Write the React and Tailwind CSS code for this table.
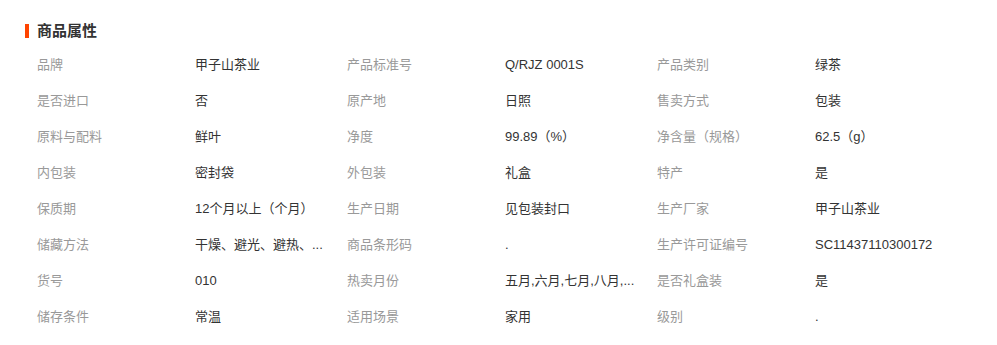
import React from 'react'

const rows = [
  [['品牌', '甲子山茶业'], ['产品标准号', 'Q/RJZ 0001S'], ['产品类别', '绿茶']],
  [['是否进口', '否'], ['原产地', '日照'], ['售卖方式', '包装']],
  [['原料与配料', '鲜叶'], ['净度', '99.89（%）'], ['净含量（规格）', '62.5（g）']],
  [['内包装', '密封袋'], ['外包装', '礼盒'], ['特产', '是']],
  [['保质期', '12个月以上（个月）'], ['生产日期', '见包装封口'], ['生产厂家', '甲子山茶业']],
  [['储藏方法', '干燥、避光、避热、...'], ['商品条形码', '.'], ['生产许可证编号', 'SC11437110300172']],
  [['货号', '010'], ['热卖月份', '五月,六月,七月,八月,...'], ['是否礼盒装', '是']],
  [['储存条件', '常温'], ['适用场景', '家用'], ['级别', '.']],
]

export default function App(){
  return (
    <div className="w-[997px] h-[345px] bg-white pt-[22px] pl-[25px] font-['Liberation_Sans','Noto_Sans_CJK_SC',sans-serif]">

      {/* title */}
      <div className="flex items-center h-[18px]">
        <span className="w-[4px] h-[14px] bg-[#ff4400]" />
        <h2 className="ml-[8px] text-[15px] leading-[18px] font-bold text-[#333]">商品属性</h2>
      </div>

      {/* attributes */}
      <div className="mt-[7px] pl-[12px]">
        {rows.map((row, i) => (
          <div key={i} className="flex h-[36px] items-center text-[13px] leading-[36px]">
            {row.map(([label, value], j) => (
              <div key={j} className="flex w-[310px]">
                <span className="w-[158px] shrink-0 text-[#999] whitespace-nowrap">{label}</span>
                <span className="w-[140px] text-[#333] whitespace-nowrap">{value}</span>
              </div>
            ))}
          </div>
        ))}
      </div>
    </div>
  )
}
